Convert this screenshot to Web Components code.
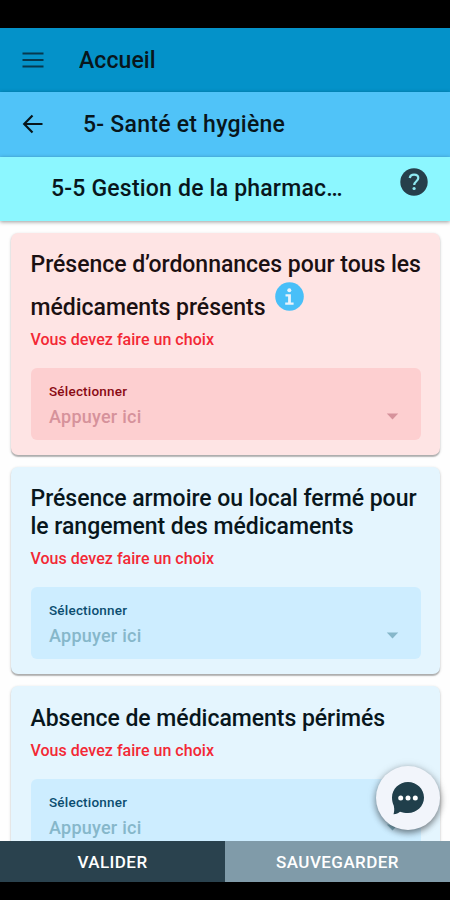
<!DOCTYPE html>
<html lang="fr">
<head>
<meta charset="utf-8">
<title>Santé et hygiène</title>
<style>
body {
    margin: 0;
    background: #000;
    font-family: Roboto, sans-serif;
    font-weight: 500;
    color: #08161c;
}
</style>
</head>
<body>

<audit-screen>
    <tool-bar slot="head" style="--bar:#0492c9; --spacing:.1px; --drop:2px">
        <app-icon slot="icon" name="menu"></app-icon>
        Accueil
    </tool-bar>
    <tool-bar slot="head" style="--bar:#50c3f8; --indent:83px; --spacing:.25px; --drop:2px">
        <app-icon slot="icon" name="back"></app-icon>
        5- Santé et hygiène
    </tool-bar>
    <tool-bar slot="head" style="--bar:#8cf7ff; --indent:51px; --end:103px; --spacing:.2px">
        5-5 Gestion de la pharmac…
        <app-icon slot="end" name="help"></app-icon>
    </tool-bar>

    <question-card error>
        Présence d’ordonnances pour tous les médicaments présents
        <app-icon name="info"></app-icon>
    </question-card>
    <question-card>Présence armoire ou local fermé pour le rangement des médicaments</question-card>
    <question-card>Absence de médicaments périmés</question-card>

    <chat-button slot="chat"></chat-button>
    <foot-button slot="foot">Valider</foot-button>
    <foot-button slot="foot" muted>Sauvegarder</foot-button>
</audit-screen>

<script>
const icons = {
    menu: `<svg width="22" height="18" viewBox="0 0 22 18"><path d="M.5 3.500h21M.5 10h21M.5 16.500h21" stroke="#06394f" stroke-width="2.200"/></svg>`,
    back: `<svg width="22" height="22" viewBox="0 0 22 22"><path d="M20.500 12H2.500M10.500 3.500 2.200 12l8.300 8.500" fill="none" stroke="#08161c" stroke-width="2.200"/></svg>`,
    help: `<svg width="28" height="28" viewBox="0 0 28 28"><circle cx="14" cy="14" r="13.700" fill="#263f4b"/><path d="M9.700 9.900c.5-2.100 2.100-3.200 4.300-3.200 2.500 0 4.300 1.300 4.300 3.400 0 3.100-4.100 3.300-4.100 6.900" fill="none" stroke="#8fe9f2" stroke-width="2.200"/><circle cx="14.100" cy="20.500" r="1.600" fill="#8fe9f2"/></svg>`,
    info: `<svg width="29" height="29" viewBox="0 0 29 29"><circle cx="14.500" cy="14.500" r="14.300" fill="#48bff8"/><circle cx="14.300" cy="8.300" r="2" fill="#e8f3fb"/><path d="M10.500 12.200h5.400v8.300h2.700v2.300h-8.400v-2.300h2.900v-6h-2.600z" fill="#e8f3fb"/></svg>`
};

class AppIcon extends HTMLElement {
    constructor() {
        super();
        this.attachShadow({mode: "open"});
    }

    connectedCallback() {
        this.shadowRoot.innerHTML = `
        <style>
        :host { display: inline-block; }
        svg { display: block; }
        </style>
        ${icons[this.getAttribute("name")]}`;
    }
}

class ToolBar extends HTMLElement {
    constructor() {
        super();
        this.attachShadow({mode: "open"});
    }

    connectedCallback() {
        this.shadowRoot.innerHTML = `
        <style>
        :host {
            display: flex;
            align-items: center;
            box-sizing: border-box;
            height: 64.5px;
            padding-top: var(--drop, 0);
            background: var(--bar);
            box-shadow: 0 1px 4px rgba(0, 0, 0, .4);
        }
        .icon {
            box-sizing: border-box;
            flex: none;
            width: var(--indent, 79px);
            padding-left: 22px;
        }
        .title {
            flex: none;
            width: calc(450px - var(--indent, 79px) - var(--end, 20px));
            overflow: hidden;
            white-space: nowrap;
            text-overflow: ellipsis;
            font-size: 23px;
            line-height: 30px;
            letter-spacing: var(--spacing, .1px);
        }
        .end {
            margin-left: auto;
            padding: 0 22px 10px 0;
        }
        </style>
        <div class="icon"><slot name="icon"></slot></div>
        <div class="title"><slot></slot></div>
        <div class="end"><slot name="end"></slot></div>`;
    }
}

class SelectField extends HTMLElement {
    constructor() {
        super();
        this.attachShadow({mode: "open"});
    }

    connectedCallback() {
        this.shadowRoot.innerHTML = `
        <style>
        :host {
            display: flex;
            justify-content: space-between;
            align-items: flex-end;
            box-sizing: border-box;
            height: 72.500px;
            padding: 0 22px 11px 18.500px;
            border-radius: 6px;
            background: var(--field);
        }
        .label {
            font-size: 13.500px;
            line-height: 18px;
            letter-spacing: .2px;
            color: var(--label);
        }
        .value {
            margin-top: 5px;
            font-size: 18px;
            line-height: 24px;
            letter-spacing: .25px;
            color: var(--hint);
        }
        svg { display: block; margin-bottom: 9px; }
        </style>
        <div>
            <div class="label">Sélectionner</div>
            <div class="value">Appuyer ici</div>
        </div>
        <svg width="13" height="7" viewBox="0 0 13 7"><path d="M.8.500h11.400L6.500 6.500z" fill="var(--hint)"/></svg>`;
    }
}

class QuestionCard extends HTMLElement {
    constructor() {
        super();
        this.attachShadow({mode: "open"});
    }

    connectedCallback() {
        this.shadowRoot.innerHTML = `
        <style>
        :host {
            --field: #cdedff;
            --label: #0b4d70;
            --hint: #86b7ca;
            display: block;
            padding: 18.750px 19px 15px 19.500px;
            border-radius: 7px;
            background: #e4f5fe;
            box-shadow: 0 2px 1px rgba(0, 0, 0, .2), 0 1px 3px rgba(0, 0, 0, .22);
        }
        :host([error]) {
            --field: #fdcfd0;
            --label: #8a0a14;
            --hint: #d6929b;
            padding-top: 17.500px;
            background: #fee4e4;
            color: #1b1012;
        }
        .title {
            font-size: 23px;
            line-height: 27.500px;
            letter-spacing: -.03px;
        }
        ::slotted(app-icon) {
            margin: 3.500px 0 0 4px;
            vertical-align: 4px;
        }
        .error {
            margin: 7.500px 0 18px;
            font-size: 16px;
            line-height: 21px;
            letter-spacing: .03px;
            color: #f32835;
        }
        </style>
        <div class="title"><slot></slot></div>
        <div class="error">Vous devez faire un choix</div>
        <select-field></select-field>`;
    }
}

class ChatButton extends HTMLElement {
    constructor() {
        super();
        this.attachShadow({mode: "open"});
    }

    connectedCallback() {
        this.shadowRoot.innerHTML = `
        <style>
        :host {
            display: flex;
            align-items: center;
            justify-content: center;
            width: 64px;
            height: 64px;
            border-radius: 50%;
            background: #f2f5fb;
            box-shadow: 0 3px 6px rgba(0, 0, 0, .4), 0 1px 10px rgba(0, 0, 0, .18);
        }
        </style>
        <svg width="34" height="34" viewBox="0 0 34 34">
            <path d="M17 1C25.800 1 33 7.900 33 16.500S25.800 32 17 32c-3 0-5.500-.4-8-1.200-1.800 1.600-3.500 2.500-6.500 2.500 .8-2.700 1-5.200.3-8.600C1.600 22 1 19.500 1 16.500 1 7.900 8.200 1 17 1z" fill="#203f4b"/>
            <g fill="#fff"><circle cx="9.700" cy="17" r="2.500"/><circle cx="17" cy="17" r="2.500"/><circle cx="24.300" cy="17" r="2.500"/></g>
        </svg>`;
    }
}

class FootButton extends HTMLElement {
    constructor() {
        super();
        this.attachShadow({mode: "open"});
    }

    connectedCallback() {
        this.shadowRoot.innerHTML = `
        <style>
        :host {
            display: flex;
            flex: 1;
            align-items: center;
            justify-content: center;
            background: #2a424e;
            color: #fff;
            font-size: 17px;
            letter-spacing: .45px;
            text-transform: uppercase;
        }
        :host([muted]) { background: #809ba9; }
        </style>
        <slot></slot>`;
    }
}

class AuditScreen extends HTMLElement {
    constructor() {
        super();
        this.attachShadow({mode: "open"});
    }

    connectedCallback() {
        this.shadowRoot.innerHTML = `
        <style>
        :host {
            display: flex;
            flex-direction: column;
            box-sizing: border-box;
            width: 450px;
            height: 900px;
            padding: 27.500px 0 18px;
            background: #000;
            overflow: hidden;
        }
        .head { position: relative; }
        main {
            display: flex;
            flex: 1;
            flex-direction: column;
            gap: 11.500px;
            min-height: 0;
            padding: 12px 10px 0 11px;
            background: #fefefe;
            overflow: hidden;
        }
        ::slotted(question-card) { flex: none; }
        .foot { display: flex; height: 41px; position: relative; }
        .chat {
            position: absolute;
            right: 10.500px;
            bottom: 52px;
        }
        </style>
        <div class="head"><slot name="head"></slot></div>
        <main><slot></slot></main>
        <div class="foot">
            <slot name="foot"></slot>
            <div class="chat"><slot name="chat"></slot></div>
        </div>`;
    }
}

customElements.define("app-icon", AppIcon);
customElements.define("tool-bar", ToolBar);
customElements.define("select-field", SelectField);
customElements.define("question-card", QuestionCard);
customElements.define("chat-button", ChatButton);
customElements.define("foot-button", FootButton);
customElements.define("audit-screen", AuditScreen);
</script>
</body>
</html>
